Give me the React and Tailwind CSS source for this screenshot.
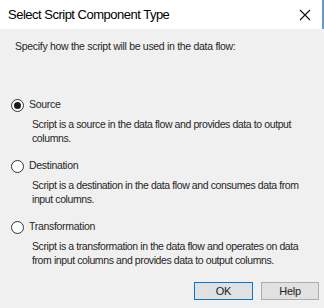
import React from "react";

function Radio({ checked }) {
  return (
    <span className="relative inline-flex h-[13px] w-[13px] shrink-0 items-center justify-center rounded-full border border-[#333333] bg-white">
      {checked && <span className="h-[7px] w-[7px] rounded-full bg-[#1a1a1a]" />}
    </span>
  );
}

function Option({ label, desc, checked }) {
  return (
    <div className="flex flex-col">
      <div className="flex h-[14px] items-center gap-[5px] pl-[11px]">
        <Radio checked={checked} />
        <span>{label}</span>
      </div>
      <p className="mt-[5px] pl-[32px] pr-[18px] leading-[14px] tracking-[-0.4px]">{desc}</p>
    </div>
  );
}

export default function App() {
  return (
    <div className="flex h-[308px] w-[324px] flex-col bg-[#f0f0f0] font-['Liberation_Sans',Arial,sans-serif] text-[10.5px] tracking-[-0.3px] text-[#262626]">
      <div className="flex h-[29px] shrink-0 items-center justify-between border-r-2 border-[#5b9bd5] bg-white pl-[8px] pr-[8px]">
        <span className="text-[13px] tracking-[-0.5px] text-black">Select Script Component Type</span>
        <svg width="12" height="12" viewBox="0 0 12 12" className="mr-[3px]">
          <path d="M1 1 L11 11 M11 1 L1 11" stroke="#111" strokeWidth="1.1" />
        </svg>
      </div>
      <div className="flex flex-1 flex-col">
        <p className="mt-[10px] pl-[15px] leading-[14px]">Specify how the script will be used in the data flow:</p>
        <div className="mt-[45px] flex flex-col gap-[14px]">
          <Option
            checked
            label="Source"
            desc="Script is a source in the data flow and provides data to output columns."
          />
          <Option
            label="Destination"
            desc="Script is a destination in the data flow and consumes data from input columns."
          />
          <Option
            label="Transformation"
            desc="Script is a transformation in the data flow and operates on data from input columns and provides data to output columns."
          />
        </div>
        <div className="mt-auto mb-[8px] flex justify-end gap-[8px] pr-[5px]">
          <button className="h-[18px] w-[59px] border border-[#0078d7] bg-[#e1e1e1] text-[11px] text-[#222]">OK</button>
          <button className="h-[18px] w-[58px] border border-[#adadad] bg-[#e1e1e1] text-[11px] text-[#222]">Help</button>
        </div>
      </div>
    </div>
  );
}
